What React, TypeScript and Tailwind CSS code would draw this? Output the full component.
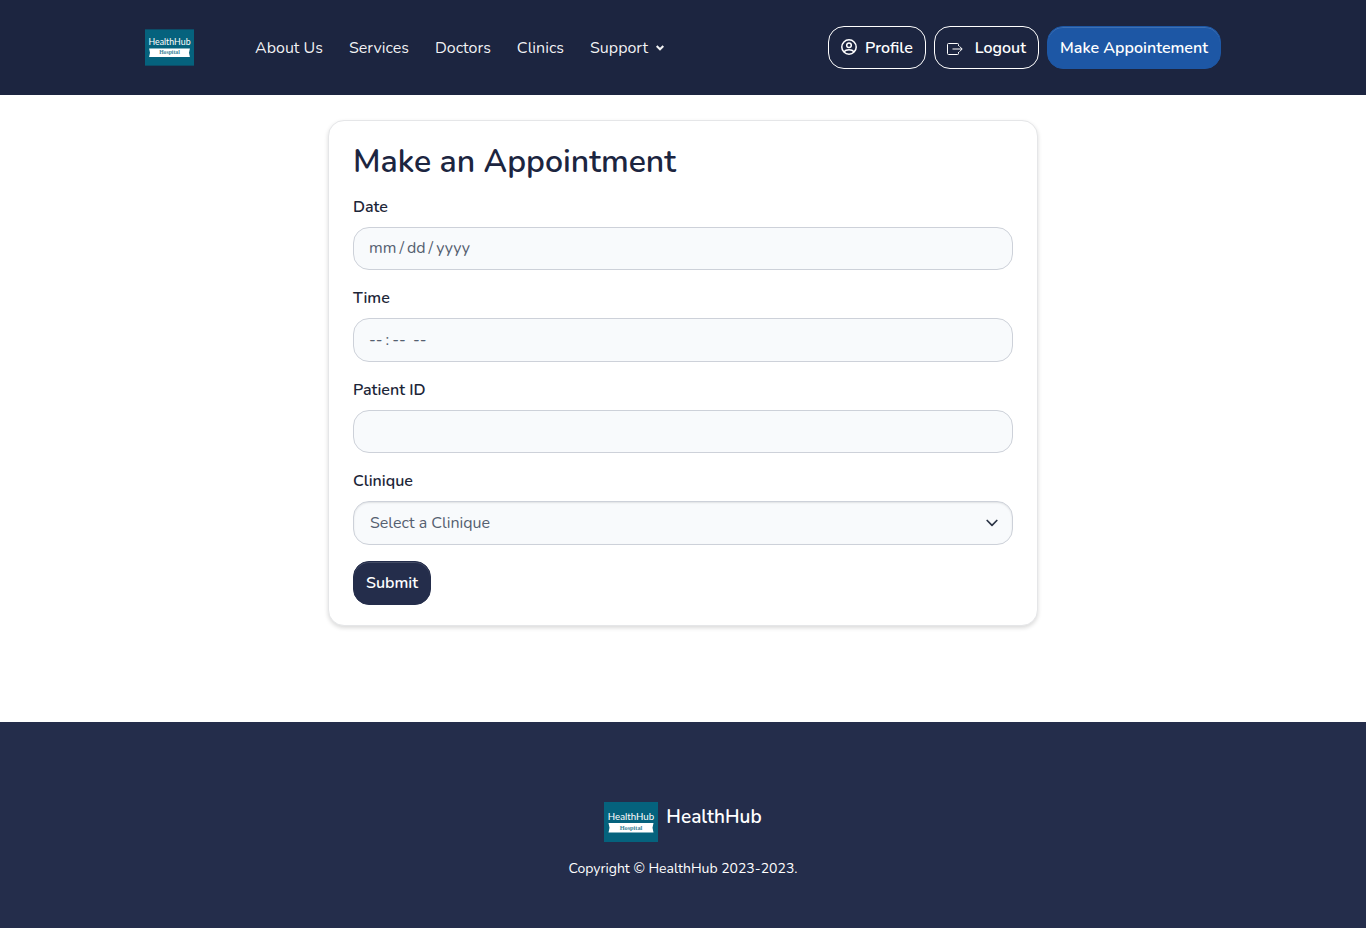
import React from "react";

const navLinks = ["About Us", "Services", "Doctors", "Clinics"];

const labelClass = "mb-2 block text-base leading-6 font-semibold text-[#1d2638]";
const fieldClass =
  "block w-full rounded-2xl border border-[#cdd1d9] bg-[#f8fafc] text-base text-[#556070] outline-none focus:border-[#1d57a5]";
const pickerClass =
  "px-[13px] pb-px [&::-webkit-calendar-picker-indicator]:opacity-0 [&::-webkit-datetime-edit-text]:px-px [&::-webkit-datetime-edit-month-field]:px-0.5 [&::-webkit-datetime-edit-day-field]:px-0.5 [&::-webkit-datetime-edit-year-field]:px-0.5 [&::-webkit-datetime-edit-hour-field]:px-0.5 [&::-webkit-datetime-edit-minute-field]:px-0.5 [&::-webkit-datetime-edit-meridiem-field]:px-0.5";

function Logo({ className }: { className: string }) {
  return (
    <svg viewBox="0 0 54 40" className={className} role="img" aria-label="HealthHub Hospital">
      <rect width="54" height="40" fill="#05627d" />
      <text x="27" y="17.500" textAnchor="middle" fontSize="9.700" fill="#fff" fontFamily="Lato, sans-serif">
        HealthHub
      </text>
      <path d="M4.500 21h45l-1 4.800 1 4.700h-45l1-4.700z" fill="#fff" />
      <text x="27" y="27.700" textAnchor="middle" fontSize="6.300" fontWeight="700" fill="#377f96" fontFamily="'Liberation Serif', serif">
        Hospital
      </text>
    </svg>
  );
}

function ProfileIcon() {
  return (
    <svg viewBox="0 0 16 16" className="mb-px size-4" fill="none" stroke="currentColor" strokeWidth="1.500" aria-hidden="true">
      <circle cx="8" cy="8" r="7.200" />
      <circle cx="8" cy="6.200" r="2.300" />
      <path d="M3 12.800C4.200 11.300 6 10.700 8 10.700s3.800.6 5 2.100" />
    </svg>
  );
}

function LogoutIcon() {
  return (
    <svg viewBox="0 0 16 12" className="mt-[3px] h-3 w-4" fill="none" stroke="currentColor" aria-hidden="true">
      <path d="M11.500 3V1.500a1 1 0 0 0-1-1h-9a1 1 0 0 0-1 1v9a1 1 0 0 0 1 1h9a1 1 0 0 0 1-1V9" />
      <path d="M5.500 6H15M12.500 3.300 15.200 6l-2.700 2.700" />
    </svg>
  );
}

export default function App() {
  return (
    <div className="flex min-h-screen flex-col bg-white font-['Nunito','Nunito_Sans','Open_Sans',sans-serif] text-base">
      <header className="bg-[#1c2540] px-6 py-[26px] text-white">
        <div className="mx-auto flex max-w-[1076px] items-center">
          <a href="#home" className="mr-[61px] shrink-0">
            <Logo className="h-[37px] w-[49px]" />
          </a>
          <nav className="flex grow items-center gap-[26px] whitespace-nowrap text-white/95">
            {navLinks.map((label) => (
              <a key={label} href="#section">
                {label}
              </a>
            ))}
            <button type="button" className="flex items-center gap-2">
              Support
              <svg viewBox="0 0 8 6" className="h-1.5 w-2" fill="none" stroke="currentColor" strokeWidth="2" aria-hidden="true">
                <path d="M.7 1 4 4.300 7.300 1" />
              </svg>
            </button>
          </nav>
          <div className="flex gap-2 font-semibold whitespace-nowrap">
            <a href="#profile" className="flex h-[43px] items-center gap-2 rounded-2xl border border-white px-3">
              <ProfileIcon />
              Profile
            </a>
            <a href="#logout" className="flex h-[43px] items-center gap-3 rounded-2xl border border-white px-3">
              <LogoutIcon />
              Logout
            </a>
            <a href="#appointment" className="flex h-[43px] items-center rounded-2xl border border-[#1d57a5] bg-[#1d57a5] px-3 shadow-[inset_0_1px_0_rgba(255,255,255,0.15)]">
              Make Appointement
            </a>
          </div>
        </div>
      </header>

      <main className="grow px-4 pt-[25px] pb-24">
        <form
          onSubmit={(event) => event.preventDefault()}
          className="mx-auto max-w-[710px] rounded-2xl border border-[#e5e6e8] bg-white px-6 py-5 shadow-[0_2px_4px_rgba(0,0,0,0.15)]"
        >
          <h1 className="mb-3 text-[32px] leading-[42px] font-semibold text-[#1c2540]">Make an Appointment</h1>
          <div className="mb-4">
            <label htmlFor="date" className={labelClass}>Date</label>
            <input id="date" type="date" className={`h-[43px] ${fieldClass} ${pickerClass}`} />
          </div>
          <div className="mb-4">
            <label htmlFor="time" className={labelClass}>Time</label>
            <input id="time" type="time" className={`h-11 ${fieldClass} ${pickerClass}`} />
          </div>
          <div className="mb-4">
            <label htmlFor="patient" className={labelClass}>Patient ID</label>
            <input id="patient" type="text" className={`h-[43px] px-4 ${fieldClass}`} />
          </div>
          <div className="mb-4">
            <label htmlFor="clinique" className={labelClass}>Clinique</label>
            <div className="grid items-center">
              <select
                id="clinique"
                className={`col-start-1 row-start-1 h-11 appearance-none px-4 shadow-[inset_0_1px_2px_rgba(0,0,0,0.1)] ${fieldClass}`}
              >
                <option>Select a Clinique</option>
              </select>
              <svg viewBox="0 0 12 8" className="pointer-events-none col-start-1 row-start-1 mr-[15px] h-2 w-3 justify-self-end" fill="none" stroke="#2b3445" strokeWidth="1.700" strokeLinecap="round" strokeLinejoin="round" aria-hidden="true">
                <path d="m1.200 1.500 4.800 4.800 4.800-4.800" />
              </svg>
            </div>
          </div>
          <button type="submit" className="block h-11 rounded-2xl border border-[#242d4b] bg-[#242d4b] px-3 font-semibold text-white shadow-[inset_0_1px_0_rgba(255,255,255,0.15)]">
            Submit
          </button>
        </form>
      </main>

      <footer className="flex flex-col items-center bg-[#242d4b] px-4 pt-20 pb-12 text-white">
        <a href="#home" className="mb-4 flex items-start gap-2">
          <Logo className="h-10 w-[54px]" />
          <span className="text-[19px] leading-[30px] font-semibold">HealthHub</span>
        </a>
        <p className="text-sm leading-[22px]">Copyright © HealthHub 2023-2023.</p>
      </footer>
    </div>
  );
}
